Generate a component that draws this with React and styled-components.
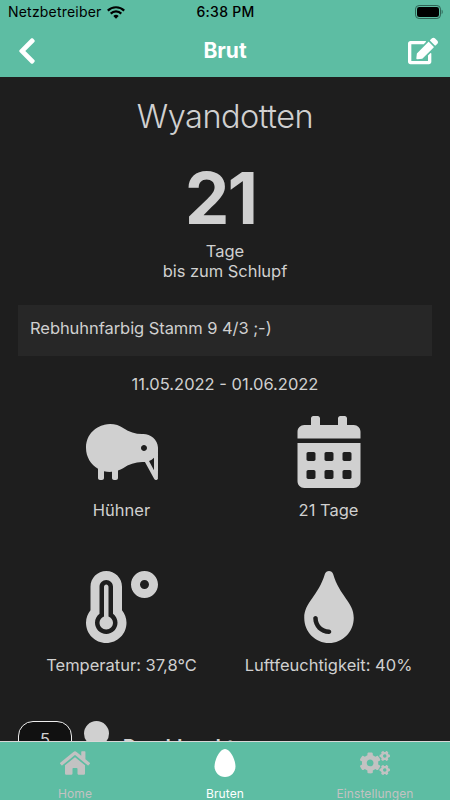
import React from "react";
import styled, { createGlobalStyle } from "styled-components";
import {
  FaCalendarAlt,
  FaChevronLeft,
  FaCogs,
  FaEdit,
  FaEgg,
  FaHome,
  FaKiwiBird,
  FaTemperatureHigh,
  FaTint,
} from "react-icons/fa";

const GlobalStyle = createGlobalStyle`
* { box-sizing: border-box; }
body {
  margin: 0;
  background: #1e1e1e;
  font-family: Inter, "Liberation Sans", sans-serif;
}
svg { display: block; }
`

const Screen = styled.div`
width: 450px;
height: 800px;
display: flex;
flex-direction: column;
overflow: hidden;
color: #d0d0d0;
background: #1e1e1e;
`

const Header = styled.header`
height: 77px;
flex: none;
background: #5dbda3;
`

const StatusBar = styled.div`
height: 24px;
display: grid;
grid-template-columns: 1fr auto 1fr;
align-items: center;
padding: 0 7px 0 8px;
color: #000;
font-size: 14px;
line-height: 24px;
`

const Carrier = styled.div`
display: flex;
align-items: center;
gap: 5px;
letter-spacing: 0.2px;
`

const Clock = styled.div`
font-weight: 500;
letter-spacing: 0.25px;
`

const Battery = styled.div`
justify-self: end;
`

const NavBar = styled.div`
height: 53px;
display: grid;
grid-template-columns: 1fr auto 1fr;
align-items: center;
padding: 0 12px;
color: #fff;
`

const NavTitle = styled.h1`
margin: 0;
font-size: 21px;
line-height: 53px;
font-weight: 700;
`

const EditButton = styled.div`
justify-self: end;
`

const Content = styled.main`
flex: 1;
min-height: 0;
overflow: hidden;
padding: 0 18px;
text-align: center;
`

const Title = styled.h2`
margin: 20px 0 0;
font-size: 32.5px;
line-height: 40px;
font-weight: 350;
letter-spacing: -0.5px;
`

const Days = styled.div`
margin-top: 21px;
padding-right: 9px;
font-size: 71px;
line-height: 80px;
font-weight: 700;
letter-spacing: -2px;
`

const Label = styled.div`
font-size: 16.5px;
line-height: 20px;
letter-spacing: ${props => props.$spacing || 0}px;
`

const Countdown = styled.div`
margin-top: 3px;
`

const Note = styled.div`
height: 51px;
margin: 24px 0 18px;
padding: 13px 12px;
background: #272727;
text-align: left;
`

const Facts = styled.div`
display: grid;
grid-template-columns: 1fr 1fr;
row-gap: 51px;
margin-top: 22px;
`

const FactItem = styled.div`
display: flex;
flex-direction: column;
align-items: center;
gap: 12px;
white-space: nowrap;
`

const Task = styled.div`
display: flex;
margin-top: 46px;
`

const TaskDay = styled.div`
width: 54px;
height: 54px;
border: 1px solid #eee;
border-radius: 15px;
background: #111;
font-size: 16.5px;
line-height: 34px;
`

const TaskMarker = styled.div`
width: 25px;
height: 25px;
margin-left: 12px;
border-radius: 50%;
background: #d0d0d0;
`

const TaskName = styled.div`
margin: 13px 0 0 14px;
font-size: 18.5px;
line-height: 24px;
font-weight: 700;
`

const TabBar = styled.nav`
height: 59px;
flex: none;
display: grid;
grid-template-columns: repeat(3, 1fr);
border-top: 1px solid #d8d8d8;
background: #5dbda3;
`

const Tab = styled.div`
display: flex;
flex-direction: column;
align-items: center;
color: ${props => props.$active ? "#fff" : "#c2c2c2"};
font-size: 12px;
line-height: 21px;
letter-spacing: 0.1px;
`

const TabIcon = styled.div`
height: 41px;
display: flex;
align-items: center;
`

const facts = [
  { icon: FaKiwiBird, text: "Hühner" },
  { icon: FaCalendarAlt, text: "21 Tage" },
  { icon: FaTemperatureHigh, text: "Temperatur: 37,8°C" },
  { icon: FaTint, text: "Luftfeuchtigkeit: 40%" },
];

const tabs = [
  { icon: FaHome, text: "Home", size: 30 },
  { icon: FaEgg, text: "Bruten", size: 28, active: true },
  { icon: FaCogs, text: "Einstellungen", size: 30 },
];

function WifiIcon() {
  return (
    <svg width="18" height="13" viewBox="0 0 18 13" fill="none" stroke="#000" strokeWidth="2.2">
      <path d="M.8 4.6a11.7 11.7 0 0 1 16.4 0" />
      <path d="M3.7 7.6a7.5 7.5 0 0 1 10.6 0" />
      <path d="M9 12.7 6.3 10a3.8 3.8 0 0 1 5.4 0z" fill="#000" stroke="none" />
    </svg>
  );
}

function BatteryIcon() {
  return (
    <svg width="28" height="14" viewBox="0 0 28 14">
      <rect x=".5" y=".5" width="25" height="13" rx="3.6" fill="none" stroke="#2f6355" />
      <rect x="2" y="2" width="22" height="10" rx="2.3" />
      <path d="M26.7 4.8c1.3.5 1.3 3.9 0 4.4z" fill="#2f6355" />
    </svg>
  );
}

export default function App() {
  return (
    <Screen>
      <GlobalStyle />
      <Header>
        <StatusBar>
          <Carrier>Netzbetreiber <WifiIcon /></Carrier>
          <Clock>6:38 PM</Clock>
          <Battery><BatteryIcon /></Battery>
        </StatusBar>
        <NavBar>
          <FaChevronLeft size={30} />
          <NavTitle>Brut</NavTitle>
          <EditButton><FaEdit size={30} /></EditButton>
        </NavBar>
      </Header>
      <Content>
        <Title>Wyandotten</Title>
        <Days>21</Days>
        <Countdown>
          <Label>Tage</Label>
          <Label $spacing={-0.05}>bis zum Schlupf</Label>
        </Countdown>
        <Note>
          <Label $spacing={-0.06}>Rebhuhnfarbig Stamm 9 4/3 ;-)</Label>
        </Note>
        <Label>11.05.2022 - 01.06.2022</Label>
        <Facts>
          {facts.map(({ icon: Icon, text }) => (
            <FactItem key={text}>
              <Icon size={72} />
              <Label>{text}</Label>
            </FactItem>
          ))}
        </Facts>
        <Task>
          <TaskDay>5</TaskDay>
          <TaskMarker />
          <TaskName>Durchleuchten</TaskName>
        </Task>
      </Content>
      <TabBar>
        {tabs.map(({ icon: Icon, text, size, active }) => (
          <Tab key={text} $active={active}>
            <TabIcon><Icon size={size} /></TabIcon>
            {text}
          </Tab>
        ))}
      </TabBar>
    </Screen>
  );
}
